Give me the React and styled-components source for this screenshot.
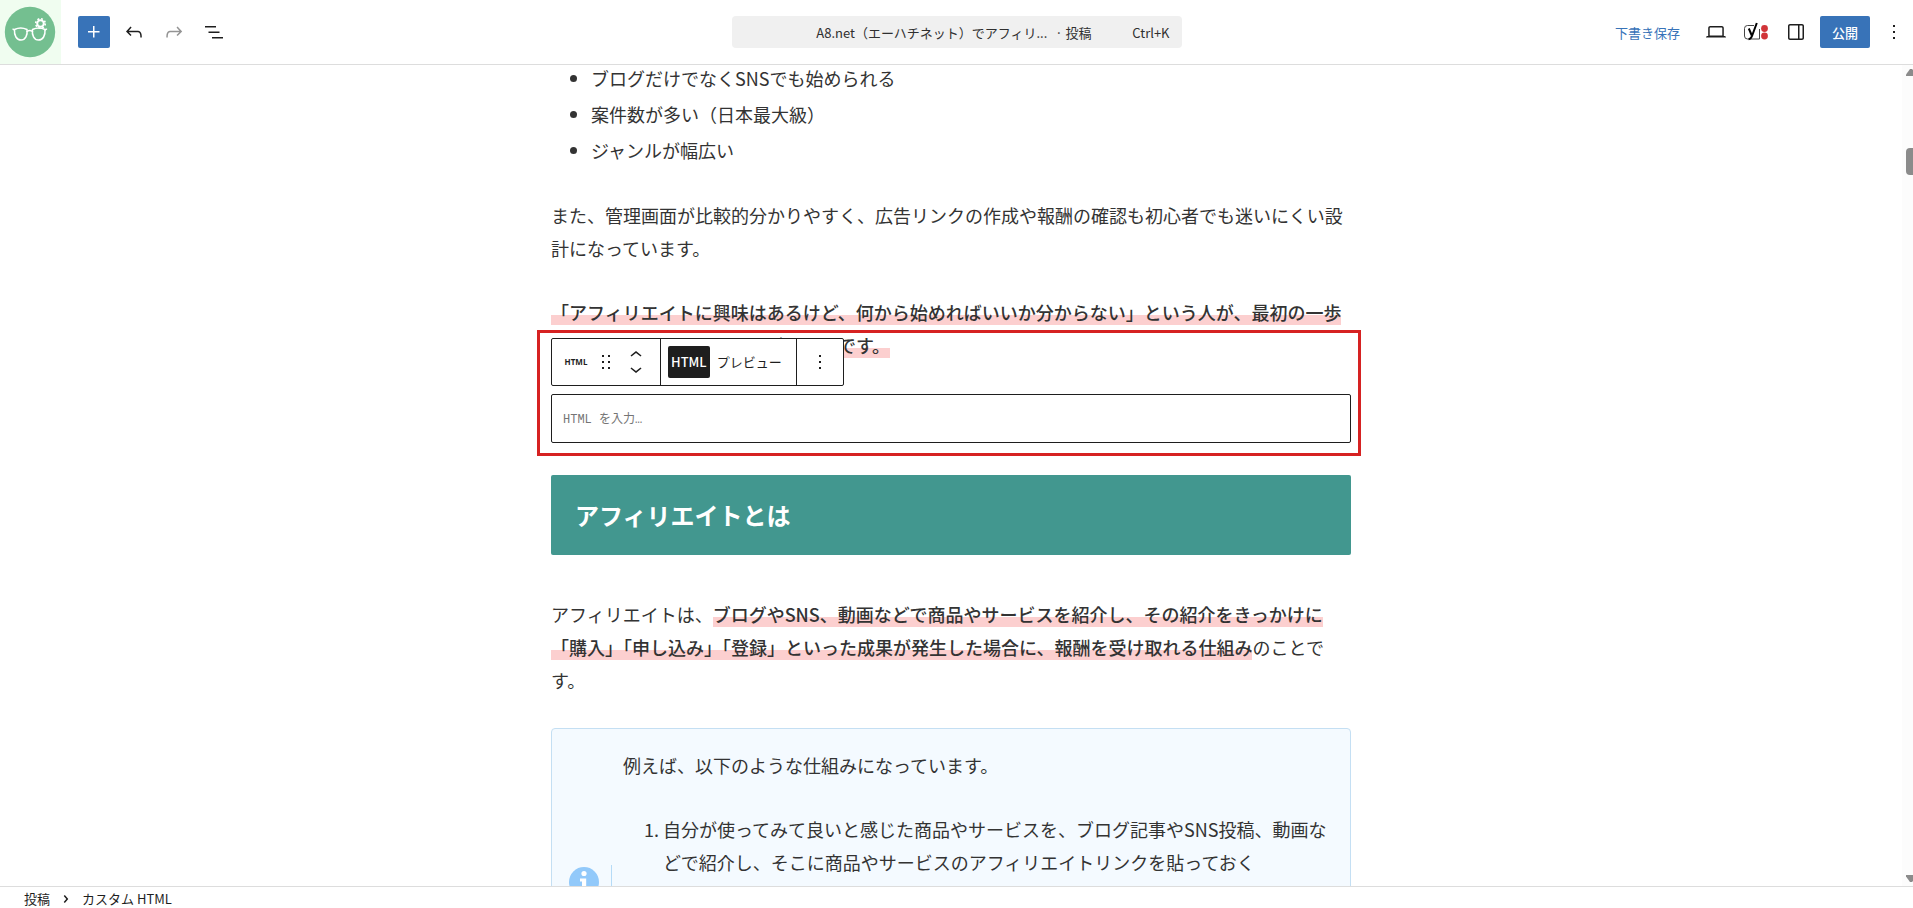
import styled, { createGlobalStyle, css } from "styled-components";

const GlobalStyle = createGlobalStyle`
  * {
    box-sizing: border-box;
  }
  body {
    margin: 0;
    background: #fff;
    color: #1e1e1e;
    font-family: "Noto Sans CJK JP", sans-serif;
    font-size: 13px;
  }
  button, input, textarea {
    font: inherit;
    color: inherit;
  }
`;

const Page = styled.div`
  display: flex;
  flex-direction: column;
  height: 100vh;
  overflow: hidden;
`;

/* ---------- top bar ---------- */

const TopBar = styled.header`
  display: grid;
  grid-template-columns: 1fr 450px 1fr;
  align-items: center;
  flex: none;
  height: 65px;
  border-bottom: 1px solid #ddd;
`;

const ToolGroup = styled.div`
  display: flex;
  align-items: center;
  gap: 8px;
  ${(props) =>
    props.$end &&
    css`
      justify-content: flex-end;
      padding-right: 3px;
    `}
`;

const SiteLink = styled.a`
  display: flex;
  align-items: center;
  width: 61px;
  height: 64px;
  margin-right: 9px;
  padding-left: 4px;
  background: #f0fdf0;
`;

const IconButton = styled.button`
  display: flex;
  align-items: center;
  justify-content: center;
  width: 32px;
  height: 32px;
  padding: 0;
  border: 0;
  border-radius: 2px;
  background: ${(props) => (props.$primary ? "#3873b8" : "transparent")};
  color: ${(props) => (props.$primary ? "#fff" : "#1e1e1e")};
  &:disabled {
    color: #949494;
  }
`;

const Icon = styled.svg`
  flex: none;
  width: 24px;
  height: 24px;
  fill: currentColor;
`;

const DocumentBar = styled.button`
  display: flex;
  align-items: center;
  height: 32px;
  padding: 0 12px;
  border: 0;
  border-radius: 4px;
  background: #f0f0f0;
  color: #2f2f2f;
`;

const DocumentTitle = styled.span`
  flex: 1;
  padding-left: 32px;
  white-space: nowrap;
`;

const PostType = styled.span`
  margin-left: 8px;
`;

const DraftButton = styled.button`
  height: 32px;
  padding: 0 12px;
  border: 0;
  background: transparent;
  color: #3873b8;
`;

const PublishButton = styled.button`
  height: 32px;
  padding: 0 12px;
  border: 0;
  border-radius: 2px;
  background: #3873b8;
  color: #fff;
  font-weight: 500;
`;

/* ---------- editor canvas ---------- */

const Workspace = styled.div`
  display: flex;
  flex: 1;
  min-height: 0;
`;

const Canvas = styled.main`
  flex: 1;
  overflow: hidden;
  color: #333;
  font-size: 18px;
  line-height: 33px;
`;

const Article = styled.article`
  max-width: 800px;
  margin: 0 auto;
`;

const BulletList = styled.ul`
  display: flex;
  flex-direction: column;
  gap: 10px;
  margin: 0 0 36px;
  padding-left: 40px;
  line-height: 26px;
`;

const Paragraph = styled.p`
  margin: 0 0 31px;
`;

const Marker = styled.strong`
  font-weight: 500;
  background: linear-gradient(transparent 60%, #fccfcf 60%);
`;

const Heading = styled.h2`
  margin: 32px 0 43px;
  padding: 20px 24px;
  border-radius: 2px;
  background: #42978f;
  color: #fff;
  font-size: 24px;
  font-weight: 700;
  line-height: 40px;
`;

const HtmlBlock = styled.section`
  position: relative;
  margin-top: 32px;
  font-size: 13px;
  line-height: 20px;
`;

const HighlightFrame = styled.div`
  position: absolute;
  inset: -64px -10px -13px -14px;
  border: 3px solid #d62222;
  pointer-events: none;
`;

const BlockToolbar = styled.div`
  position: absolute;
  top: -56px;
  left: 0;
  display: flex;
  height: 48px;
  border: 1px solid #1e1e1e;
  border-radius: 2px;
  background: #fff;
  color: #1e1e1e;
`;

const ToolbarGroup = styled.div`
  display: flex;
  align-items: center;
  padding: 0 ${(props) => props.$pad || 0}px;
  & + & {
    border-left: 1px solid #1e1e1e;
  }
`;

const BlockTypeButton = styled.button`
  width: 42px;
  height: 46px;
  padding: 0 0 0 6px;
  border: 0;
  background: transparent;
  font-family: "Noto Sans", sans-serif;
  font-size: 8px;
  font-weight: 700;
`;

const DragButton = styled(IconButton)`
  width: 24px;
`;

const Movers = styled.div`
  display: flex;
  flex-direction: column;
  margin: 0 12px 0 6px;
`;

const MoverButton = styled(IconButton)`
  width: 24px;
  height: 14px;
`;

const ModeButton = styled.button`
  height: 32px;
  padding: 0 ${(props) => (props.$active ? 3 : 7)}px;
  border: 0;
  border-radius: 2px;
  background: ${(props) => (props.$active ? "#1e1e1e" : "transparent")};
  color: ${(props) => (props.$active ? "#fff" : "#1e1e1e")};
  font-weight: ${(props) => (props.$active ? 500 : 400)};
`;

const HtmlInput = styled.textarea`
  display: block;
  width: 100%;
  height: 49px;
  padding: 15px 11px 0;
  border: 1px solid #1e1e1e;
  border-radius: 2px;
  outline: 0;
  resize: none;
  overflow: hidden;
  font-family: "Liberation Mono", "Noto Sans CJK JP", monospace;
  font-size: 12px;
  line-height: 20px;
  &::placeholder {
    color: #757575;
    opacity: 1;
  }
`;

const InfoBox = styled.aside`
  display: flex;
  min-height: 308px;
  margin-top: 30px;
  padding: 20px 20px 20px 17px;
  border: 1px solid #c4dff3;
  border-radius: 4px;
  background: #f4faff;
`;

const InfoIcon = styled.div`
  display: flex;
  align-items: center;
  align-self: center;
  height: 34px;
  margin-right: 11px;
  padding-right: 12px;
  border-right: 1px solid #b5dbf7;
`;

const NumberedList = styled.ol`
  margin: 0;
  padding-left: 40px;
`;

/* ---------- scrollbar and footer ---------- */

const ScrollTrack = styled.div`
  display: flex;
  flex-direction: column;
  align-items: flex-end;
  justify-content: space-between;
  width: 11px;
  padding: 4px 0;
  overflow: hidden;
  background: #fcfcfc;
`;

const ScrollArrow = styled.svg`
  width: 7px;
  height: 7px;
  fill: #8b8b8b;
`;

const ScrollRail = styled.div`
  flex: 1;
  padding-top: 72px;
`;

const ScrollThumb = styled.div`
  width: 7px;
  height: 27px;
  border-radius: 4px 0 0 4px;
  background: #8b8b8b;
`;

const Footer = styled.footer`
  display: flex;
  align-items: center;
  flex: none;
  gap: 4px;
  height: 22px;
  padding: 2px 24px 0;
  border-top: 1px solid #ddd;
`;

const paths = {
  plus: "M11 12.5V17.5H12.5V12.5H17.5V11H12.5V6H11V11H6V12.5H11Z",
  undo: "M18.3 11.7c-.6-.6-1.4-.9-2.3-.9H6.7l2.9-3.3-1.1-1-4.5 5L8.5 16l1-1-2.7-2.7H16c.5 0 .9.2 1.3.5 1 1 1 3.4 1 4.5v.3h1.5v-.2c0-1.5 0-4.3-1.5-5.7z",
  redo: "M15.6 6.5l-1.1 1 2.9 3.3H8c-.9 0-1.7.3-2.3.9-1.4 1.5-1.4 4.2-1.4 5.6v.2h1.5v-.3c0-1.1 0-3.5 1-4.5.3-.3.7-.5 1.3-.5h9.2L14.5 15l1.1 1.1 4.6-4.6-4.6-5z",
  outline: "M3 6h11v1.5H3V6Zm3.5 5.5h11V13h-11v-1.5ZM21 17H10v1.5h11V17Z",
  desktop:
    "M20.5 16h-.7V8c0-1.1-.9-2-2-2H6.2c-1.1 0-2 .9-2 2v8h-.7c-.8 0-1.5.7-1.5 1.5h20c0-.8-.7-1.5-1.5-1.5zM5.7 8c0-.3.2-.5.5-.5h11.6c.3 0 .5.2.5.5v7.6H5.7V8z",
  sidebar:
    "M18 4H6c-1.1 0-2 .9-2 2v12c0 1.1.9 2 2 2h12c1.1 0 2-.9 2-2V6c0-1.1-.9-2-2-2zm-4 14.5H6c-.3 0-.5-.2-.5-.5V6c0-.3.2-.5.5-.5h8v13zm4.500-.5c0 .3-.2.5-.5.5h-2.500v-13H18c.3 0 .5.2.5.5v12z",
  more: "M13 19h-2v-2h2v2zm0-6h-2v-2h2v2zm0-6h-2V5h2v2z",
  drag: "M8 7h2V5H8v2zm0 6h2v-2H8v2zm0 6h2v-2H8v2zm6-14v2h2V5h-2zm0 8h2v-2h-2v2zm0 6h2v-2h-2v2z",
  up: "M6.5 12.4L12 8l5.5 4.4-.9 1.2L12 10l-4.5 3.6-1-1.2z",
  down: "M17.5 11.6L12 16l-5.5-4.4.9-1.2L12 14l4.5-3.6 1 1.2z",
  next: "M10.8622 8.04053L14.2805 12.0286L10.8622 16.0167L9.72327 15.0405L12.3049 12.0286L9.72327 9.01672L10.8622 8.04053Z",
};

const Glyph = ({ name }) => (
  <Icon viewBox="0 0 24 24" aria-hidden="true">
    <path d={paths[name]} />
  </Icon>
);

const SiteLogo = () => (
  <svg width="52" height="52" viewBox="0 0 52 52" aria-hidden="true">
    <circle cx="26" cy="26" r="25.2" fill="#74bf90" />
    <g fill="none" stroke="#fff" strokeWidth="1.5" strokeLinecap="round">
      <path d="M10.500 23.500c3.500-1.700 9-1.700 12.500 0c.8 5.500-1.600 10.500-6 10.500s-7-4.500-6.500-10.500z" />
      <path d="M28.500 23.500c3.500-1.700 9-1.700 12.500 0c.5 6-2 10.500-6.500 10.500s-6.800-5-6-10.500z" />
      <path d="M23 25.500c1.800-1.300 3.700-1.300 5.500 0M10.500 24l-1.500-.8M41 24l1.500-.8" />
    </g>
    <circle cx="36.500" cy="17.500" r="3.300" fill="none" stroke="#fff" strokeWidth="2" />
    <circle
      cx="36.500"
      cy="17.500"
      r="4.800"
      fill="none"
      stroke="#fff"
      strokeWidth="1.600"
      strokeDasharray="1.900 1.870"
    />
  </svg>
);

const SeoIcon = () => (
  <svg width="26" height="24" viewBox="0 0 26 24" aria-hidden="true">
    <path
      d="M11 5.500H4.500a3 3 0 0 0-3 3V16a3 3 0 0 0 3 3h12V9"
      fill="none"
      stroke="#444"
      strokeWidth="1"
    />
    <path d="M13.800 3L9 16c-.7 2-1.700 3-3.400 3.200" fill="none" stroke="#000" strokeWidth="2" />
    <path d="M5.800 8.500l3 7" fill="none" stroke="#000" strokeWidth="2" />
    <circle cx="21.500" cy="8.500" r="3.400" fill="#d13438" />
    <circle cx="21.500" cy="16" r="3.400" fill="#d13438" />
  </svg>
);

const InfoMark = () => (
  <svg width="30" height="30" viewBox="0 0 30 30" aria-hidden="true">
    <circle cx="15" cy="15" r="15" fill="#92c9fa" />
    <circle cx="15" cy="6.500" r="2.600" fill="#fff" />
    <path d="M11 11.500h6.200v9.500H19v2.800h-8V21h2v-6.600h-2z" fill="#fff" />
  </svg>
);

const features = [
  "ブログだけでなくSNSでも始められる",
  "案件数が多い（日本最大級）",
  "ジャンルが幅広い",
];

export default function App() {
  return (
    <Page>
      <GlobalStyle />
      <TopBar>
        <ToolGroup>
          <SiteLink href="#" aria-label="サイト">
            <SiteLogo />
          </SiteLink>
          <IconButton $primary aria-label="ブロックを追加">
            <Glyph name="plus" />
          </IconButton>
          <IconButton aria-label="元に戻す">
            <Glyph name="undo" />
          </IconButton>
          <IconButton disabled aria-label="やり直す">
            <Glyph name="redo" />
          </IconButton>
          <IconButton aria-label="ドキュメント概観">
            <Glyph name="outline" />
          </IconButton>
        </ToolGroup>
        <DocumentBar>
          <DocumentTitle>
            A8.net（エーハチネット）でアフィリ...
            <PostType>· 投稿</PostType>
          </DocumentTitle>
          <span>Ctrl+K</span>
        </DocumentBar>
        <ToolGroup $end>
          <DraftButton>下書き保存</DraftButton>
          <IconButton aria-label="表示">
            <Glyph name="desktop" />
          </IconButton>
          <IconButton aria-label="SEO">
            <SeoIcon />
          </IconButton>
          <IconButton aria-label="設定">
            <Glyph name="sidebar" />
          </IconButton>
          <PublishButton>公開</PublishButton>
          <IconButton aria-label="オプション">
            <Glyph name="more" />
          </IconButton>
        </ToolGroup>
      </TopBar>

      <Workspace>
        <Canvas>
          <Article>
            <BulletList>
              {features.map((item) => (
                <li key={item}>{item}</li>
              ))}
            </BulletList>
            <Paragraph>
              また、管理画面が比較的分かりやすく、広告リンクの作成や報酬の確認も初心者でも迷いにくい設計になっています。
            </Paragraph>
            <Paragraph>
              <Marker>
                「アフィリエイトに興味はあるけど、何から始めればいいか分からない」という人が、最初の一歩としておすすめしたいサービスなのです。
              </Marker>
            </Paragraph>

            <HtmlBlock>
              <HtmlInput aria-label="HTML" placeholder="HTML を入力…" />
              <BlockToolbar>
                <ToolbarGroup>
                  <BlockTypeButton>HTML</BlockTypeButton>
                  <DragButton aria-label="ドラッグ">
                    <Glyph name="drag" />
                  </DragButton>
                  <Movers>
                    <MoverButton aria-label="上に移動">
                      <Glyph name="up" />
                    </MoverButton>
                    <MoverButton aria-label="下に移動">
                      <Glyph name="down" />
                    </MoverButton>
                  </Movers>
                </ToolbarGroup>
                <ToolbarGroup $pad={7}>
                  <ModeButton $active>HTML</ModeButton>
                  <ModeButton>プレビュー</ModeButton>
                </ToolbarGroup>
                <ToolbarGroup $pad={7}>
                  <IconButton aria-label="オプション">
                    <Glyph name="more" />
                  </IconButton>
                </ToolbarGroup>
              </BlockToolbar>
              <HighlightFrame />
            </HtmlBlock>

            <Heading>アフィリエイトとは</Heading>
            <Paragraph>
              アフィリエイトは、
              <Marker>
                ブログやSNS、動画などで商品やサービスを紹介し、その紹介をきっかけに「購入」「申し込み」「登録」といった成果が発生した場合に、報酬を受け取れる仕組み
              </Marker>
              のことです。
            </Paragraph>
            <InfoBox>
              <InfoIcon>
                <InfoMark />
              </InfoIcon>
              <div>
                <Paragraph>例えば、以下のような仕組みになっています。</Paragraph>
                <NumberedList>
                  <li>
                    自分が使ってみて良いと感じた商品やサービスを、ブログ記事やSNS投稿、動画などで紹介し、そこに商品やサービスのアフィリエイトリンクを貼っておく
                  </li>
                </NumberedList>
              </div>
            </InfoBox>
          </Article>
        </Canvas>
        <ScrollTrack>
          <ScrollArrow viewBox="0 0 7 7">
            <path d="M0 7V5.500L4 0h2l1 1v6z" />
          </ScrollArrow>
          <ScrollRail>
            <ScrollThumb />
          </ScrollRail>
          <ScrollArrow viewBox="0 0 7 7">
            <path d="M0 0v1.500L4 7h2l1-1V0z" />
          </ScrollArrow>
        </ScrollTrack>
      </Workspace>

      <Footer>
        <span>投稿</span>
        <Glyph name="next" />
        <span>カスタム HTML</span>
      </Footer>
    </Page>
  );
}
